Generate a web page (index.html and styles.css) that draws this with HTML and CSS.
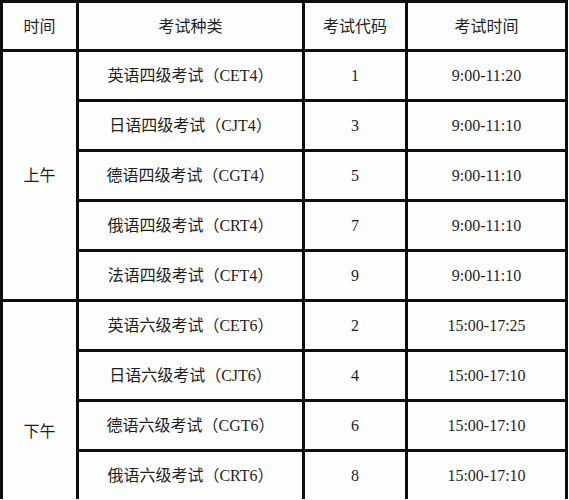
FILE: index.html
```html
<!DOCTYPE html>
<html lang="zh-CN">
<head>
<meta charset="utf-8">
<title>考试时间表</title>
<link rel="stylesheet" href="styles.css">
</head>
<body>
<div class="schedule">
  <div class="cell head">时间</div>
  <div class="cell head">考试种类</div>
  <div class="cell head">考试代码</div>
  <div class="cell head">考试时间</div>

  <div class="cell period am">上午</div>
  <div class="cell">英语四级考试（CET4）</div>
  <div class="cell">1</div>
  <div class="cell">9:00-11:20</div>
  <div class="cell">日语四级考试（CJT4）</div>
  <div class="cell">3</div>
  <div class="cell">9:00-11:10</div>
  <div class="cell">德语四级考试（CGT4）</div>
  <div class="cell">5</div>
  <div class="cell">9:00-11:10</div>
  <div class="cell">俄语四级考试（CRT4）</div>
  <div class="cell">7</div>
  <div class="cell">9:00-11:10</div>
  <div class="cell">法语四级考试（CFT4）</div>
  <div class="cell">9</div>
  <div class="cell">9:00-11:10</div>

  <div class="cell period pm">下午</div>
  <div class="cell">英语六级考试（CET6）</div>
  <div class="cell">2</div>
  <div class="cell">15:00-17:25</div>
  <div class="cell">日语六级考试（CJT6）</div>
  <div class="cell">4</div>
  <div class="cell">15:00-17:10</div>
  <div class="cell">德语六级考试（CGT6）</div>
  <div class="cell">6</div>
  <div class="cell">15:00-17:10</div>
  <div class="cell">俄语六级考试（CRT6）</div>
  <div class="cell">8</div>
  <div class="cell">15:00-17:10</div>
</div>
</body>
</html>
```

FILE: styles.css
```css
html, body {
  margin: 0;
  padding: 0;
  background: #ffffff;
}

.schedule {
  display: grid;
  grid-template-columns: 73px 223px 100px 157px;
  grid-template-rows: 46px;
  grid-auto-rows: 47px;
  gap: 3px;
  padding: 3px 3px 0 3px;
  width: max-content;
  background: #0d0d0d;
  font-family: "Liberation Serif", "Noto Sans CJK SC", serif;
  font-size: 16px;
  color: #1e1e1e;
}

.cell {
  background: #fefefe;
  display: flex;
  align-items: center;
  justify-content: center;
  line-height: 20px;
  white-space: nowrap;
}

.head {
  padding-top: 1px;
}

.period.am {
  grid-column: 1;
  grid-row: 2 / span 5;
}

.period.pm {
  grid-column: 1;
  grid-row: 7 / span 4;
  padding-top: 62px;
}
```
